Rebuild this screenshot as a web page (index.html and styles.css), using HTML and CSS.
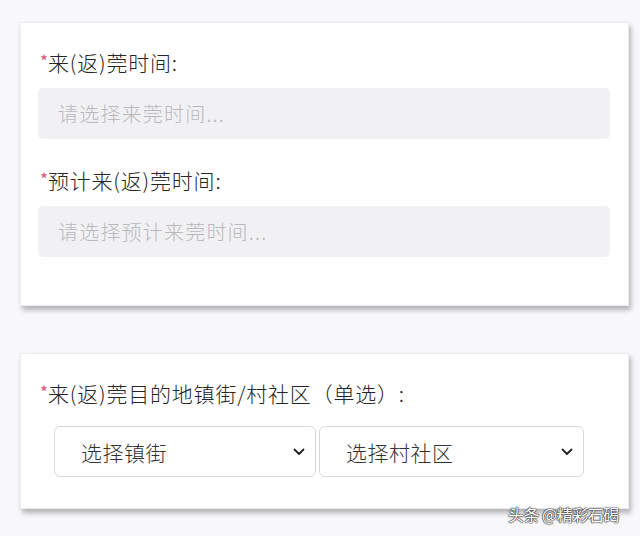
FILE: index.html
```html
<!DOCTYPE html>
<html lang="zh">
<head>
<meta charset="utf-8">
<link rel="stylesheet" href="styles.css">
</head>
<body>
<div class="page">
  <section class="card card-time">
    <div class="field">
      <label class="label"><span class="req">*</span>来(返)莞时间:</label>
      <div class="input">请选择来莞时间...</div>
    </div>
    <div class="field field-2">
      <label class="label"><span class="req">*</span>预计来(返)莞时间:</label>
      <div class="input">请选择预计来莞时间...</div>
    </div>
  </section>
  <section class="card card-place">
    <label class="label"><span class="req">*</span>来(返)莞目的地镇街/村社区（单选）:</label>
    <div class="selects">
      <div class="select">选择镇街<svg class="chev" viewBox="0 0 12 8" width="12" height="8"><path d="M1.5 1.5 L6 6 L10.5 1.5" fill="none" stroke="#222" stroke-width="1.8" stroke-linecap="round" stroke-linejoin="round"/></svg></div>
      <div class="select">选择村社区<svg class="chev" viewBox="0 0 12 8" width="12" height="8"><path d="M1.5 1.5 L6 6 L10.5 1.5" fill="none" stroke="#222" stroke-width="1.8" stroke-linecap="round" stroke-linejoin="round"/></svg></div>
    </div>
  </section>
  <div class="watermark">头条 @精彩石碣</div>
</div>
</body>
</html>
```
FILE: styles.css
```css
html, body {
  margin: 0;
  padding: 0;
  background: #f8f8fb;
  font-family: "Noto Sans CJK SC", "Noto Sans", sans-serif;
  color: #222;
}
.page {
  position: relative;
  width: 640px;
  height: 536px;
  padding-top: 22px;
  box-sizing: border-box;
  overflow: hidden;
}
.card {
  margin-left: 20px;
  width: 609px;
  box-sizing: border-box;
  background: #fff;
  border: 1px solid #ececf0;
  box-shadow: 2px 4px 5px rgba(0, 0, 0, 0.28);
  padding-left: 17px;
  padding-right: 18px;
}
.card-time {
  padding-top: 24px;
  padding-bottom: 48px;
}
.label {
  display: block;
  font-size: 21px;
  font-weight: 300;
  line-height: 28px;
  height: 28px;
  color: #262626;
  letter-spacing: 0.8px;
  white-space: nowrap;
}
.req {
  color: #d9587a;
  font-size: 17px;
  font-weight: 400;
  vertical-align: 3px;
  margin-left: 2px;
  margin-right: 0;
  letter-spacing: 0;
}
.input {
  margin-top: 13px;
  height: 51px;
  background: #f1f1f3;
  border-radius: 5px;
  font-size: 20px;
  font-weight: 300;
  letter-spacing: 1.2px;
  line-height: 51px;
  color: #b9b9bd;
  padding-left: 20px;
}
.field-2 {
  margin-top: 26px;
}
.card-place {
  margin-top: 47px;
  padding-top: 24px;
  padding-bottom: 31px;
}
.selects {
  display: flex;
  gap: 3px;
  margin-top: 20px;
  margin-left: 16px;
}
.select {
  display: flex;
  align-items: center;
  justify-content: space-between;
  width: 262px;
  height: 51px;
  box-sizing: border-box;
  border: 1px solid #d9d9dd;
  border-radius: 6px;
  padding-left: 26px;
  padding-right: 10px;
  font-size: 21px;
  font-weight: 300;
  letter-spacing: 0.5px;
  color: #333;
}
.select + .select {
  width: 265px;
}
.watermark {
  position: absolute;
  left: 508px;
  top: 503px;
  font-size: 16px;
  line-height: 22px;
  color: #fff;
  letter-spacing: -0.5px;
  text-shadow: 0 0 1px #222, 0 0 1px #222, 0 0 2px #222;
}
```
